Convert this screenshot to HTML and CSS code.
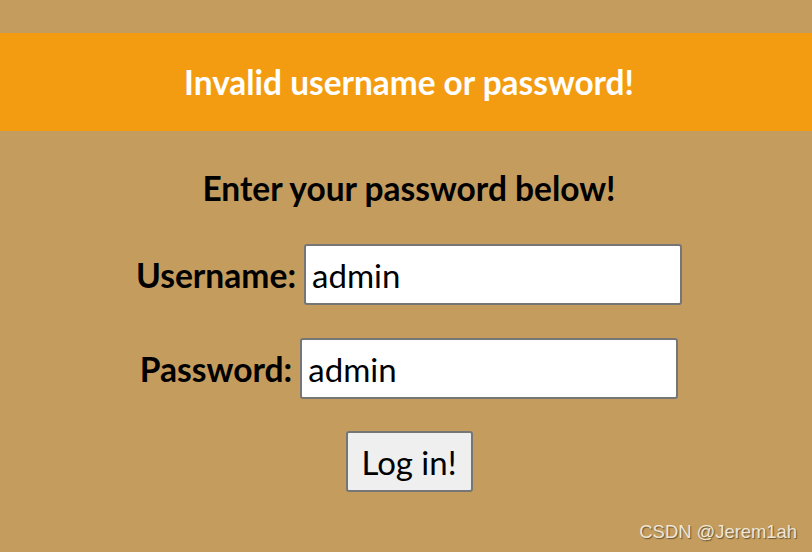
FILE: index.html
```html
<!DOCTYPE html>
<html>
<head>
<meta charset="utf-8">
<link rel="stylesheet" href="styles.css">
</head>
<body>
<div class="page">
  <div class="banner">Invalid username or password!</div>
  <form class="login">
    <h2 class="title">Enter your password below!</h2>
    <div class="row">
      <label class="label">Username:</label>
      <input class="field" type="text" value="admin">
    </div>
    <div class="row">
      <label class="label">Password:</label>
      <input class="field" type="text" value="admin">
    </div>
    <div class="row">
      <button class="btn" type="button">Log in!</button>
    </div>
  </form>
  <div class="watermark">CSDN @Jerem1ah</div>
</div>
</body>
</html>
```
FILE: styles.css
```css
html, body {
  margin: 0;
  padding: 0;
  height: 100%;
}
body {
  background: #c49c5e;
  font-family: Lato, "Open Sans", sans-serif;
  color: #000;
}
.page {
  height: 552px;
  display: flex;
  flex-direction: column;
  align-items: center;
  position: relative;
  overflow: hidden;
}
.banner {
  box-sizing: border-box;
  margin-top: 33px;
  width: 100%;
  height: 98px;
  padding-left: 6px;
  background: #f39c12;
  color: #fff;
  font-weight: 700;
  font-size: 33.4px;
  display: flex;
  align-items: center;
  justify-content: center;
}
.login {
  box-sizing: border-box;
  width: 100%;
  padding-left: 6px;
  display: flex;
  flex-direction: column;
  align-items: center;
}
.title {
  margin: 38px 0 0;
  font-size: 33.5px;
  font-weight: 700;
  line-height: 38px;
}
.row {
  display: flex;
  align-items: center;
  gap: 8px;
  margin-top: 37px;
}
.row + .row {
  margin-top: 33px;
}
.label {
  font-weight: 700;
  font-size: 33.6px;
}
.field {
  box-sizing: border-box;
  width: 378px;
  height: 61px;
  border: 2px solid #767676;
  border-radius: 3px;
  padding: 0 6px;
  font-family: Lato, sans-serif;
  font-size: 33px;
  background: #fff;
  color: #000;
}
.row + .row + .row {
  margin-top: 32px;
}
.btn {
  box-sizing: border-box;
  width: 127px;
  height: 61px;
  border: 2px solid #767676;
  border-radius: 3px;
  background: #efefef;
  font-family: Lato, sans-serif;
  font-size: 33px;
  color: #000;
  padding: 0;
}
.watermark {
  position: absolute;
  right: 15px;
  bottom: 9px;
  font-family: "Liberation Sans", sans-serif;
  font-size: 18.4px;
  color: #eee6d6;
  text-shadow: 1px 1px 1px #6b5430;
}
```
